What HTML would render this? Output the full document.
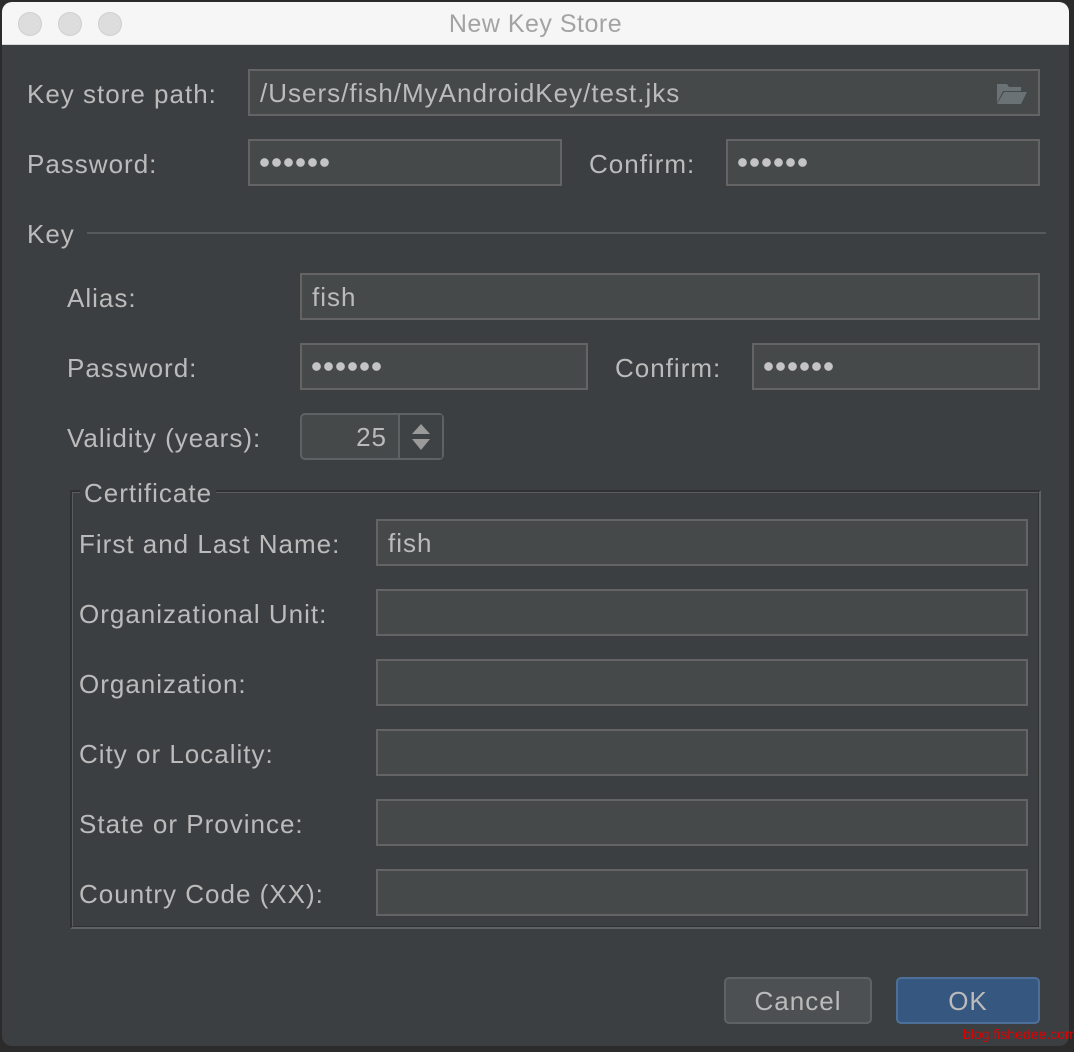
<!DOCTYPE html>
<html><head><meta charset="utf-8"><style>
*{box-sizing:border-box;margin:0;padding:0}
body{width:1074px;height:1052px;background:#2b2b2b;position:relative;overflow:hidden;font-family:"Liberation Sans",sans-serif;font-size:26px;color:#bbbbbb;letter-spacing:1px}
#win{position:absolute;left:2px;top:2px;width:1067px;height:1044px;background:#3c3f41;border-radius:10px;overflow:hidden}
#tb{position:absolute;left:0;top:0;width:100%;height:43px;background:#f6f6f6;border-bottom:1px solid #d6d6d6}
.c{position:absolute;top:10px;width:24px;height:24px;border-radius:50%;background:#dddddd;border:1px solid #cfcfcf}
#title{position:absolute;left:0;width:100%;top:8px;text-align:center;color:#a3a3a3;letter-spacing:0.5px;font-size:25px}
.l{position:absolute;white-space:nowrap;line-height:30px}
.f{position:absolute;height:47px;background:#45494a;border:2px solid #646464;padding-left:10px;line-height:45px;color:#bbbbbb}
.btn{position:absolute;height:47px;border-radius:5px;text-align:center;line-height:45px}
.d{position:absolute;left:10px;top:17px;width:70px;height:9px;background:radial-gradient(circle at 4.5px 4.5px,#c4c4c4 4px,transparent 4.6px) 0 0/12px 9px repeat-x}
</style></head><body>
<div id="win">
<div id="tb"><div class="c" style="left:16px"></div><div class="c" style="left:56px"></div><div class="c" style="left:96px"></div><div id="title">New Key Store</div></div>
</div>
<div class="l" style="left:27px;top:79px">Key store path:</div>
<div class="f" style="left:248px;top:69px;width:792px">/Users/fish/MyAndroidKey/test.jks
<svg style="position:absolute;right:10px;top:12px" width="32" height="22" viewBox="0 0 32 22"><path d="M1 1h10l2 3h12v4H7L1 20z" fill="#6b7275"/><path d="M8 9h23l-6 12H1z" fill="#6b7275"/></svg></div>
<div class="l" style="left:27px;top:149px">Password:</div>
<div class="f" style="left:248px;top:139px;width:314px"><div class="d"></div></div>
<div class="l" style="left:589px;top:149px">Confirm:</div>
<div class="f" style="left:726px;top:139px;width:314px"><div class="d"></div></div>
<div class="l" style="left:27px;top:219px">Key</div>
<div style="position:absolute;left:87px;top:232px;width:959px;height:2px;background:#555a5c"></div>
<div class="l" style="left:67px;top:283px">Alias:</div>
<div class="f" style="left:300px;top:273px;width:740px">fish</div>
<div class="l" style="left:67px;top:353px">Password:</div>
<div class="f" style="left:300px;top:343px;width:288px"><div class="d"></div></div>
<div class="l" style="left:615px;top:353px">Confirm:</div>
<div class="f" style="left:752px;top:343px;width:288px"><div class="d"></div></div>
<div class="l" style="left:67px;top:423px">Validity (years):</div>
<div style="position:absolute;left:300px;top:413px;width:144px;height:47px;border:2px solid #5e6264;border-radius:5px;background:#45494a">
<div style="position:absolute;left:0;top:0;width:96px;height:43px;text-align:right;padding-right:11px;line-height:45px">25</div>
<div style="position:absolute;left:96px;top:0;width:44px;height:43px;border-left:2px solid #5e6264;background:#3f4244">
<svg style="position:absolute;left:11px;top:9px" width="20" height="26"><path d="M10 0L19 10H1z M10 26L19 15H1z" fill="#9a9a9a"/></svg></div></div>
<div style="position:absolute;left:70px;top:490px;width:971px;height:439px;border:2px solid #2f3133;border-right-color:#5e6264;border-bottom-color:#5e6264"></div>
<div style="position:absolute;left:72px;top:492px;width:967px;height:435px;border:1px solid #5a5d5f;border-right-color:#2f3133;border-bottom-color:#2f3133"></div>
<div class="l" style="left:80px;top:478px;background:#3c3f41;padding:0 4px">Certificate</div>
<div class="l" style="left:79px;top:529px">First and Last Name:</div>
<div class="f" style="left:376px;top:519px;width:652px">fish</div>
<div class="l" style="left:79px;top:599px">Organizational Unit:</div>
<div class="f" style="left:376px;top:589px;width:652px"></div>
<div class="l" style="left:79px;top:669px">Organization:</div>
<div class="f" style="left:376px;top:659px;width:652px"></div>
<div class="l" style="left:79px;top:739px">City or Locality:</div>
<div class="f" style="left:376px;top:729px;width:652px"></div>
<div class="l" style="left:79px;top:809px">State or Province:</div>
<div class="f" style="left:376px;top:799px;width:652px"></div>
<div class="l" style="left:79px;top:879px">Country Code (XX):</div>
<div class="f" style="left:376px;top:869px;width:652px"></div>
<div class="btn" style="left:724px;top:977px;width:148px;background:#4c5052;border:2px solid #5e6264">Cancel</div>
<div class="btn" style="left:896px;top:977px;width:144px;background:#365880;border:2px solid #4c709a">OK</div>
<div style="position:absolute;left:963px;top:1026px;font-size:14px;letter-spacing:0;color:#e00000">blog.fishedee.com</div>
</body></html>
